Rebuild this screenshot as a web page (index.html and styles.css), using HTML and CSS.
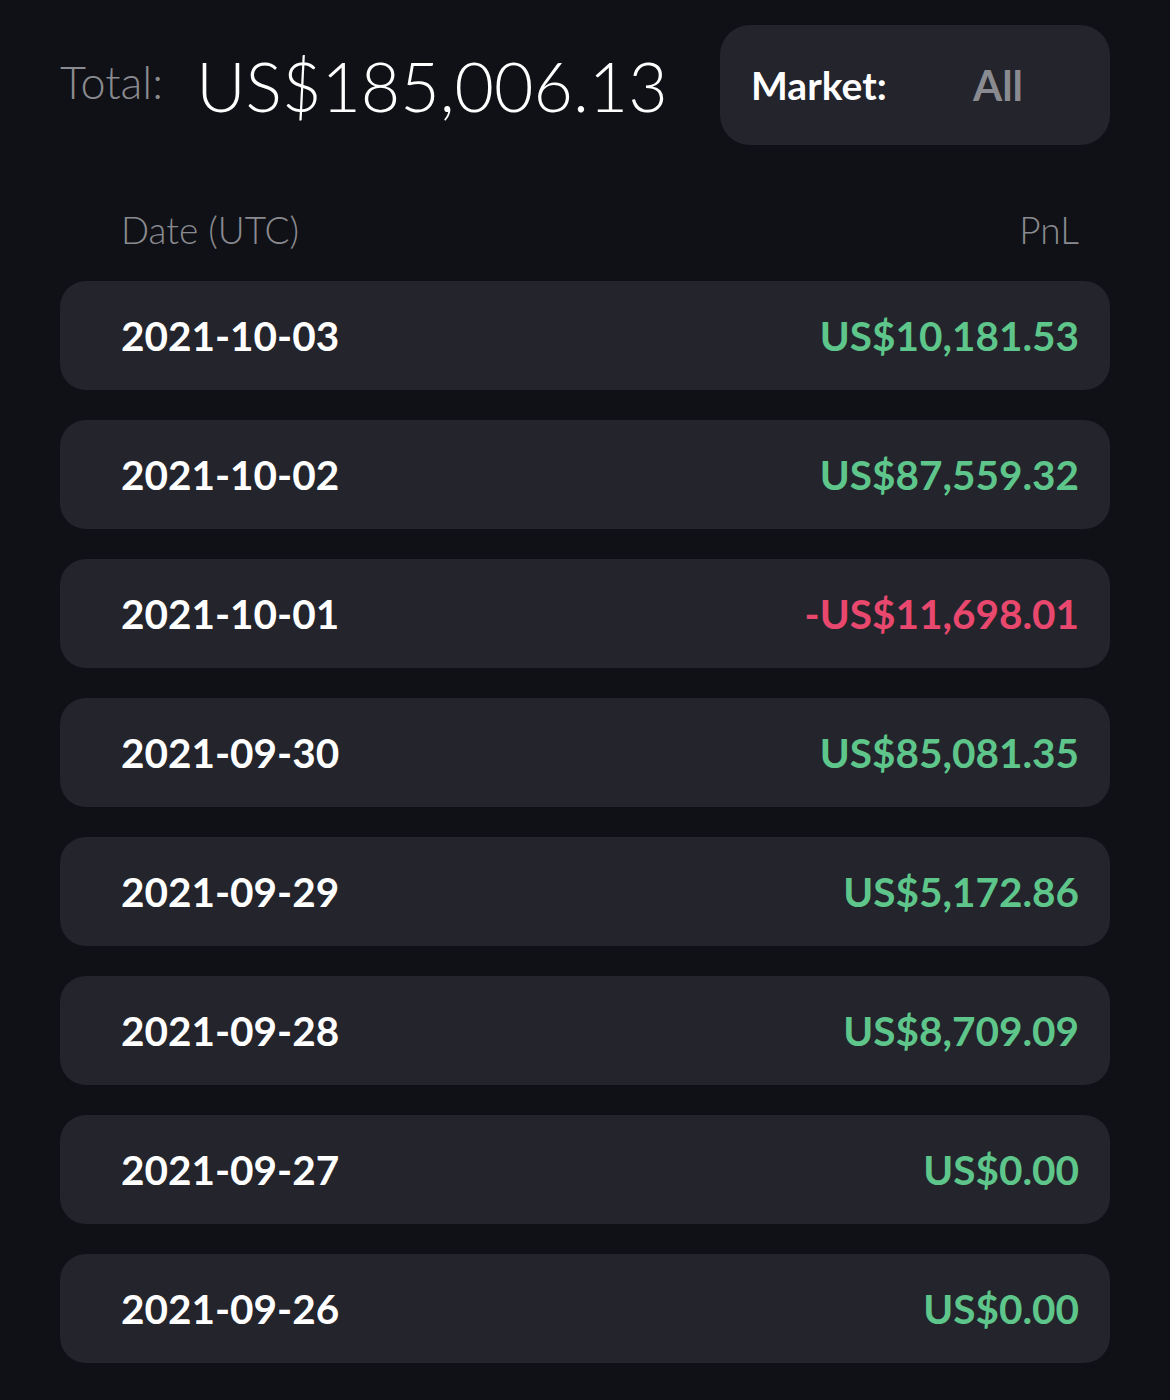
FILE: index.html
```html
<!DOCTYPE html>
<html>
<head>
<meta charset="utf-8">
<link rel="stylesheet" href="styles.css">
</head>
<body>
<div class="page">
  <div class="top">
    <div class="total">
      <span class="total-label">Total:</span>
      <span class="total-value">US$185,006.13</span>
    </div>
    <div class="market">
      <span class="market-label">Market:</span>
      <span class="market-value">All</span>
    </div>
  </div>
  <div class="head">
    <span>Date (UTC)</span>
    <span>PnL</span>
  </div>
  <div class="rows">
    <div class="row"><span class="date">2021-10-03</span><span class="pnl pos">US$10,181.53</span></div>
    <div class="row"><span class="date">2021-10-02</span><span class="pnl pos">US$87,559.32</span></div>
    <div class="row"><span class="date">2021-10-01</span><span class="pnl neg">-US$11,698.01</span></div>
    <div class="row"><span class="date">2021-09-30</span><span class="pnl pos">US$85,081.35</span></div>
    <div class="row"><span class="date">2021-09-29</span><span class="pnl pos">US$5,172.86</span></div>
    <div class="row"><span class="date">2021-09-28</span><span class="pnl pos">US$8,709.09</span></div>
    <div class="row"><span class="date">2021-09-27</span><span class="pnl pos">US$0.00</span></div>
    <div class="row"><span class="date">2021-09-26</span><span class="pnl pos">US$0.00</span></div>
  </div>
</div>
</body>
</html>
```
FILE: styles.css
```css
* { box-sizing: border-box; }
html, body { margin: 0; padding: 0; background: #101116; }
body { font-family: Lato, "Noto Sans", sans-serif; color: #fff; }
.page { width: 1170px; height: 1400px; padding: 25px 60px 0 60px; }
.top { display: flex; justify-content: space-between; align-items: center; height: 120px; }
.total { display: flex; align-items: center; gap: 33px; }
.total-label { font-size: 45px; font-weight: 300; color: #8a8b90; margin-top: -6px; }
.total-value { font-size: 68px; font-weight: 300; color: #fff; }
.market { width: 390px; height: 120px; background: #23242c; border-radius: 30px; display: flex; align-items: center; padding-left: 31px; }
.market-label { font-size: 39px; font-weight: 700; color: #fff; width: 222px; }
.market-value { font-size: 42px; font-weight: 700; color: #8a8b90; }
.head { display: flex; justify-content: space-between; padding: 32px 31px 0 61px; height: 136px; align-items: center; font-size: 37px; font-weight: 300; color: #8a8b90; }
.rows { display: flex; flex-direction: column; gap: 30px; }
.row { height: 109px; background: #23242c; border-radius: 26px; display: flex; justify-content: space-between; align-items: center; padding: 0 31px 0 61px; font-size: 40.5px; font-weight: 700; }
.date { color: #fff; }
.pos { color: #5ec68a; }
.neg { color: #e8486e; }
```
